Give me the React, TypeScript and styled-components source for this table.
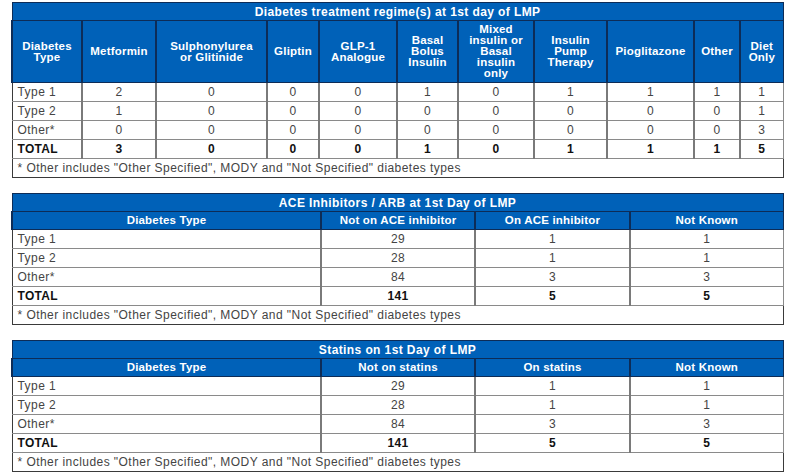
import React from 'react';
import styled, {createGlobalStyle} from 'styled-components';

const GlobalStyle = createGlobalStyle`
  html, body {
    margin: 0;
    padding: 0;
    background: #ffffff;
  }
  body {
    font-family: "Liberation Sans", Arial, sans-serif;
  }
`;

interface Section {
  title: string,
  columns: Array<string>,
  widths: Array<number>,
  headHeight: number,
  rows: Array<Array<string>>,
  total: Array<string>
}

const NOTE = '* Other includes "Other Specified", MODY and "Not Specified" diabetes types';

const sections: Array<Section> = [
  {
    title: 'Diabetes treatment regime(s) at 1st day of LMP',
    columns: ['Diabetes\nType', 'Metformin', 'Sulphonylurea\nor Glitinide', 'Gliptin', 'GLP-1\nAnalogue',
      'Basal\nBolus\nInsulin', 'Mixed\ninsulin or\nBasal\ninsulin\nonly', 'Insulin\nPump\nTherapy',
      'Pioglitazone', 'Other', 'Diet\nOnly'],
    widths: [70, 74, 111, 52, 78, 61, 76, 73, 87, 46, 43],
    headHeight: 62,
    rows: [
      ['Type 1', '2', '0', '0', '0', '1', '0', '1', '1', '1', '1'],
      ['Type 2', '1', '0', '0', '0', '0', '0', '0', '0', '0', '1'],
      ['Other*', '0', '0', '0', '0', '0', '0', '0', '0', '0', '3']
    ],
    total: ['TOTAL', '3', '0', '0', '0', '1', '0', '1', '1', '1', '5']
  },
  {
    title: 'ACE Inhibitors / ARB at 1st Day of LMP',
    columns: ['Diabetes Type', 'Not on ACE inhibitor', 'On ACE inhibitor', 'Not Known'],
    widths: [309, 154, 155, 153],
    headHeight: 18,
    rows: [
      ['Type 1', '29', '1', '1'],
      ['Type 2', '28', '1', '1'],
      ['Other*', '84', '3', '3']
    ],
    total: ['TOTAL', '141', '5', '5']
  },
  {
    title: 'Statins on 1st Day of LMP',
    columns: ['Diabetes Type', 'Not on statins', 'On statins', 'Not Known'],
    widths: [309, 154, 155, 153],
    headHeight: 18,
    rows: [
      ['Type 1', '29', '1', '1'],
      ['Type 2', '28', '1', '1'],
      ['Other*', '84', '3', '3']
    ],
    total: ['TOTAL', '141', '5', '5']
  }
];

const RegimeTable: React.FC<{section: Section}> = ({section}) => {
  const span = section.columns.length;

  return (
    <Table>
      <colgroup>
        {section.widths.map((w, i) => <col key={i} style={{width: w}}/>)}
      </colgroup>
      <thead>
        <tr>
          <TitleCell colSpan={span}>{section.title}</TitleCell>
        </tr>
        <tr style={{height: section.headHeight}}>
          {section.columns.map((c, i) => <HeadCell key={i}>{c}</HeadCell>)}
        </tr>
      </thead>
      <tbody>
        {section.rows.map((row, r) => (
          <BodyRow key={r}>
            {row.map((v, i) => <Cell key={i} $first={i === 0}>{v}</Cell>)}
          </BodyRow>
        ))}
        <BodyRow>
          {section.total.map((v, i) => <Cell key={i} $first={i === 0} $bold>{v}</Cell>)}
        </BodyRow>
        <BodyRow>
          <Note colSpan={span}>{NOTE}</Note>
        </BodyRow>
      </tbody>
    </Table>
  );
};

const App: React.FC = () => (
  <Page>
    <GlobalStyle/>
    {sections.map((s, i) => <RegimeTable key={i} section={s}/>)}
  </Page>
);

const Page = styled.div`
  display: flex;
  flex-direction: column;
  gap: 15px;
  padding: 2px 0 0 11px;
  width: 771px;
`;
const Table = styled.table`
  width: 771px;
  table-layout: fixed;
  border-collapse: collapse;
  border: 1px solid #3a3a3a;
`;
const TitleCell = styled.th`
  height: 17px;
  padding: 0;
  background: #0061b8;
  color: #ffffff;
  font-size: 12px;
  letter-spacing: 0.4px;
  font-weight: bold;
  text-align: center;
  border: 1px solid #0d2c57;
`;
const HeadCell = styled.th`
  padding: 0 2px;
  background: #0061b8;
  color: #ffffff;
  font-size: 11.5px;
  line-height: 11px;
  letter-spacing: 0.2px;
  font-weight: bold;
  text-align: center;
  white-space: pre-line;
  border: 1px solid #0d2c57;
  border-left-width: 2px;
`;
const BodyRow = styled.tr`
  height: 19px;
`;
const Cell = styled.td<{$first?: boolean, $bold?: boolean}>`
  padding: 0 ${p => p.$first ? '5px' : '0'};
  font-size: 12px;
  letter-spacing: ${p => p.$bold ? '0.3px' : '0.45px'};
  color: ${p => p.$bold ? '#111111' : '#444444'};
  font-weight: ${p => p.$bold ? 'bold' : 'normal'};
  text-align: ${p => p.$first ? 'left' : 'center'};
  border: 1px solid #8a8a8a;
  border-left: ${p => p.$first ? '1px solid #3a3a3a' : '2px solid #7a7a7a'};
`;
const Note = styled.td`
  padding: 0 5px;
  font-size: 12px;
  letter-spacing: 0.45px;
  color: #444444;
  border: 1px solid #3a3a3a;
`;

export default App;
